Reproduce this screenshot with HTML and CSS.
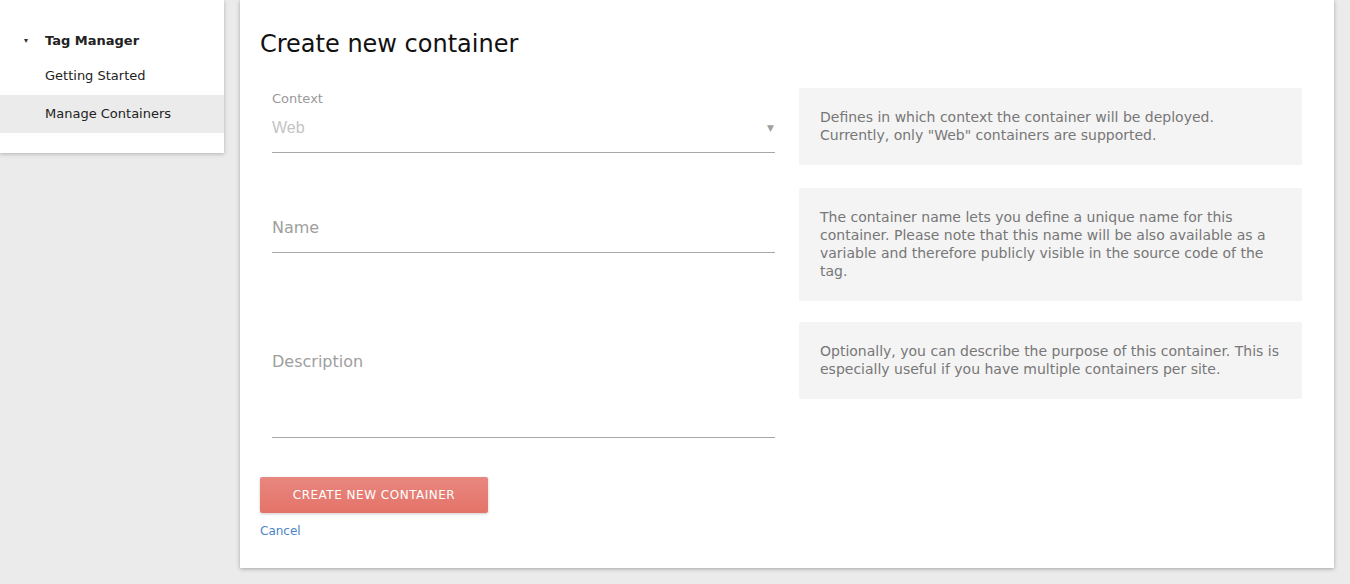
FILE: index.html
```html
<!DOCTYPE html>
<html>
<head>
<meta charset="utf-8">
<link rel="stylesheet" href="styles.css">
</head>
<body>
<div class="page">
  <nav class="sidebar">
    <div class="nav-head"><span class="caret">&#9662;</span>Tag Manager</div>
    <div class="nav-item">Getting Started</div>
    <div class="nav-item active">Manage Containers</div>
  </nav>
  <main class="card">
    <h1 class="title">Create new container</h1>
    <div class="row row-1">
      <div class="col">
        <div class="field">
          <div class="field-label">Context</div>
          <div class="select"><span class="select-value">Web</span><span class="select-arrow">&#9660;</span></div>
        </div>
      </div>
      <div class="col">
        <div class="help">Defines in which context the container will be deployed. Currently, only "Web" containers are supported.</div>
      </div>
    </div>
    <div class="row row-2">
      <div class="col">
        <div class="field plain">
          <div class="input">Name</div>
        </div>
      </div>
      <div class="col">
        <div class="help">The container name lets you define a unique name for this container. Please note that this name will be also available as a variable and therefore publicly visible in the source code of the tag.</div>
      </div>
    </div>
    <div class="row row-3">
      <div class="col">
        <div class="field plain">
          <div class="input textarea">Description</div>
        </div>
      </div>
      <div class="col">
        <div class="help">Optionally, you can describe the purpose of this container. This is especially useful if you have multiple containers per site.</div>
      </div>
    </div>
    <div class="actions">
      <button class="btn">Create new container</button>
      <a class="cancel" href="#">Cancel</a>
    </div>
  </main>
</div>
</body>
</html>
```

FILE: styles.css
```css
html, body {
  margin: 0;
  padding: 0;
  background: #ebebeb;
  font-family: "DejaVu Sans", sans-serif;
}

.page {
  display: flex;
  align-items: flex-start;
  gap: 16px;
  padding: 0 16px 16px 0;
}

.sidebar {
  width: 224px;
  flex: 0 0 224px;
  background: #fff;
  box-shadow: 0 1px 4px rgba(0, 0, 0, 0.25);
  padding: 22px 0 20px;
  font-size: 13px;
  color: #222;
}

.nav-head {
  height: 35px;
  font-weight: bold;
  padding-left: 24px;
  padding-top: 1px;
  box-sizing: border-box;
  display: flex;
  align-items: center;
}

.caret {
  font-size: 8px;
  width: 21px;
  display: inline-block;
  color: #333;
}

.nav-item {
  height: 38px;
  line-height: 38px;
  padding-left: 45px;
}

.nav-item.active {
  background: #ebebeb;
}

.card {
  flex: 1;
  height: 568px;
  box-sizing: border-box;
  background: #fff;
  box-shadow: 0 1px 4px rgba(0, 0, 0, 0.3);
  padding: 29px 20px 30px;
}

.title {
  margin: 0;
  font-size: 24px;
  font-weight: normal;
  line-height: 30px;
  color: #111;
}

.row {
  display: grid;
  grid-template-columns: 1fr 1fr;
  align-items: start;
}

.row-1 { margin-top: 29px; margin-bottom: 23px; }
.row-2 { margin-bottom: 21px; }
.row-3 { margin-bottom: 0; }

.col {
  padding: 0 12px;
}

.field.plain {
  padding-top: 27px;
}

.field-label {
  font-size: 13px;
  line-height: 20px;
  height: 20px;
  padding-top: 1px;
  margin-bottom: 6px;
  color: #999;
}

.select {
  display: flex;
  justify-content: space-between;
  align-items: center;
  height: 24px;
  padding-top: 1px;
  padding-bottom: 12px;
  border-bottom: 1px solid #a8a8a8;
}

.select-value {
  font-family: "Liberation Sans", Arial, sans-serif;
  font-size: 16px;
  color: #c4c4c4;
}

.select-arrow {
  font-size: 9px;
  color: #a0a0a0;
  margin-right: 1px;
}

.input {
  font-size: 16px;
  line-height: 24px;
  height: 24px;
  padding-top: 1px;
  padding-bottom: 12px;
  color: #9e9e9e;
  border-bottom: 1px solid #a8a8a8;
}

.input.textarea {
  height: 75px;
}

.help {
  background: #f4f4f4;
  color: #777;
  font-size: 14px;
  line-height: 18px;
  padding: 20px 21px 21px;
  border-radius: 2px;
}

.actions {
  padding-top: 39px;
  display: flex;
  flex-direction: column;
  align-items: flex-start;
}

.btn {
  height: 36px;
  width: 228px;
  border: none;
  border-radius: 2px;
  background: linear-gradient(#e8877f, #e47369);
  color: #fff;
  font-family: "DejaVu Sans", sans-serif;
  font-size: 12px;
  letter-spacing: 0.5px;
  text-transform: uppercase;
  box-shadow: 0 1px 3px rgba(0, 0, 0, 0.2);
  padding: 0;
}

.cancel {
  margin-top: 9px;
  font-size: 12px;
  line-height: 18px;
  color: #4a86c8;
  text-decoration: none;
}
```
